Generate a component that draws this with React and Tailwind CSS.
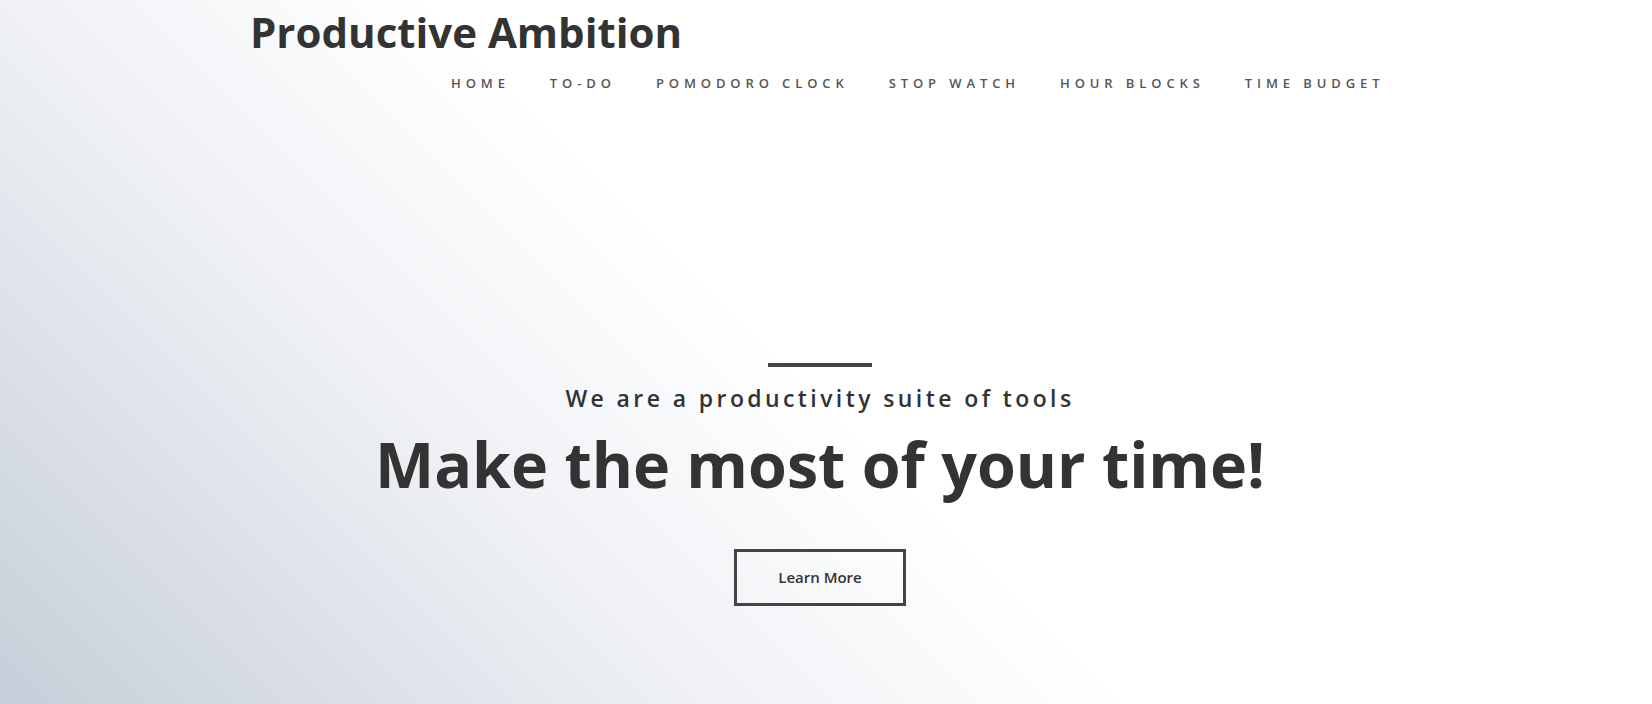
const links = ["Home", "To-Do", "Pomodoro Clock", "Stop Watch", "Hour Blocks", "Time Budget"];

const App = () => {
    return (
        <div className="h-[704px] w-full overflow-hidden bg-[linear-gradient(45deg,#c6ced9_0%,#eff1f5_30%,#ffffff_48%,#ffffff_100%)] font-['Open_Sans',sans-serif] text-[#333]">
            <header className="mx-auto w-[1152px] pt-[7px]">
                <h1 className="text-[42px] font-bold leading-[50px]">Productive Ambition</h1>
                <nav className="mt-[16px] flex gap-[40px] pl-[201px]">
                    {links.map((link) => (
                        <a
                            key={link}
                            href="#"
                            className="text-[13px] font-semibold uppercase leading-[20px] tracking-[4.9px] text-[#555]"
                        >
                            {link}
                        </a>
                    ))}
                </nav>
            </header>
            <section className="flex w-full flex-col items-center pr-[12px]">
                <div className="mt-[270px] h-[4px] w-[104px] bg-[#444]" />
                <h3 className="mt-[16px] text-[23px] font-semibold leading-[30px] tracking-[3.4px]">
                    We are a productivity suite of tools
                </h3>
                <h2 className="mt-[13px] text-[62.8px] font-bold leading-[75px]">
                    Make the most of your time!
                </h2>
                <a
                    href="#"
                    className="mt-[48px] flex h-[57px] w-[172px] items-center justify-center border-[3px] border-[#444] text-[15px] font-semibold text-[#333]"
                >
                    Learn More
                </a>
            </section>
        </div>
    );
};

export default App;
